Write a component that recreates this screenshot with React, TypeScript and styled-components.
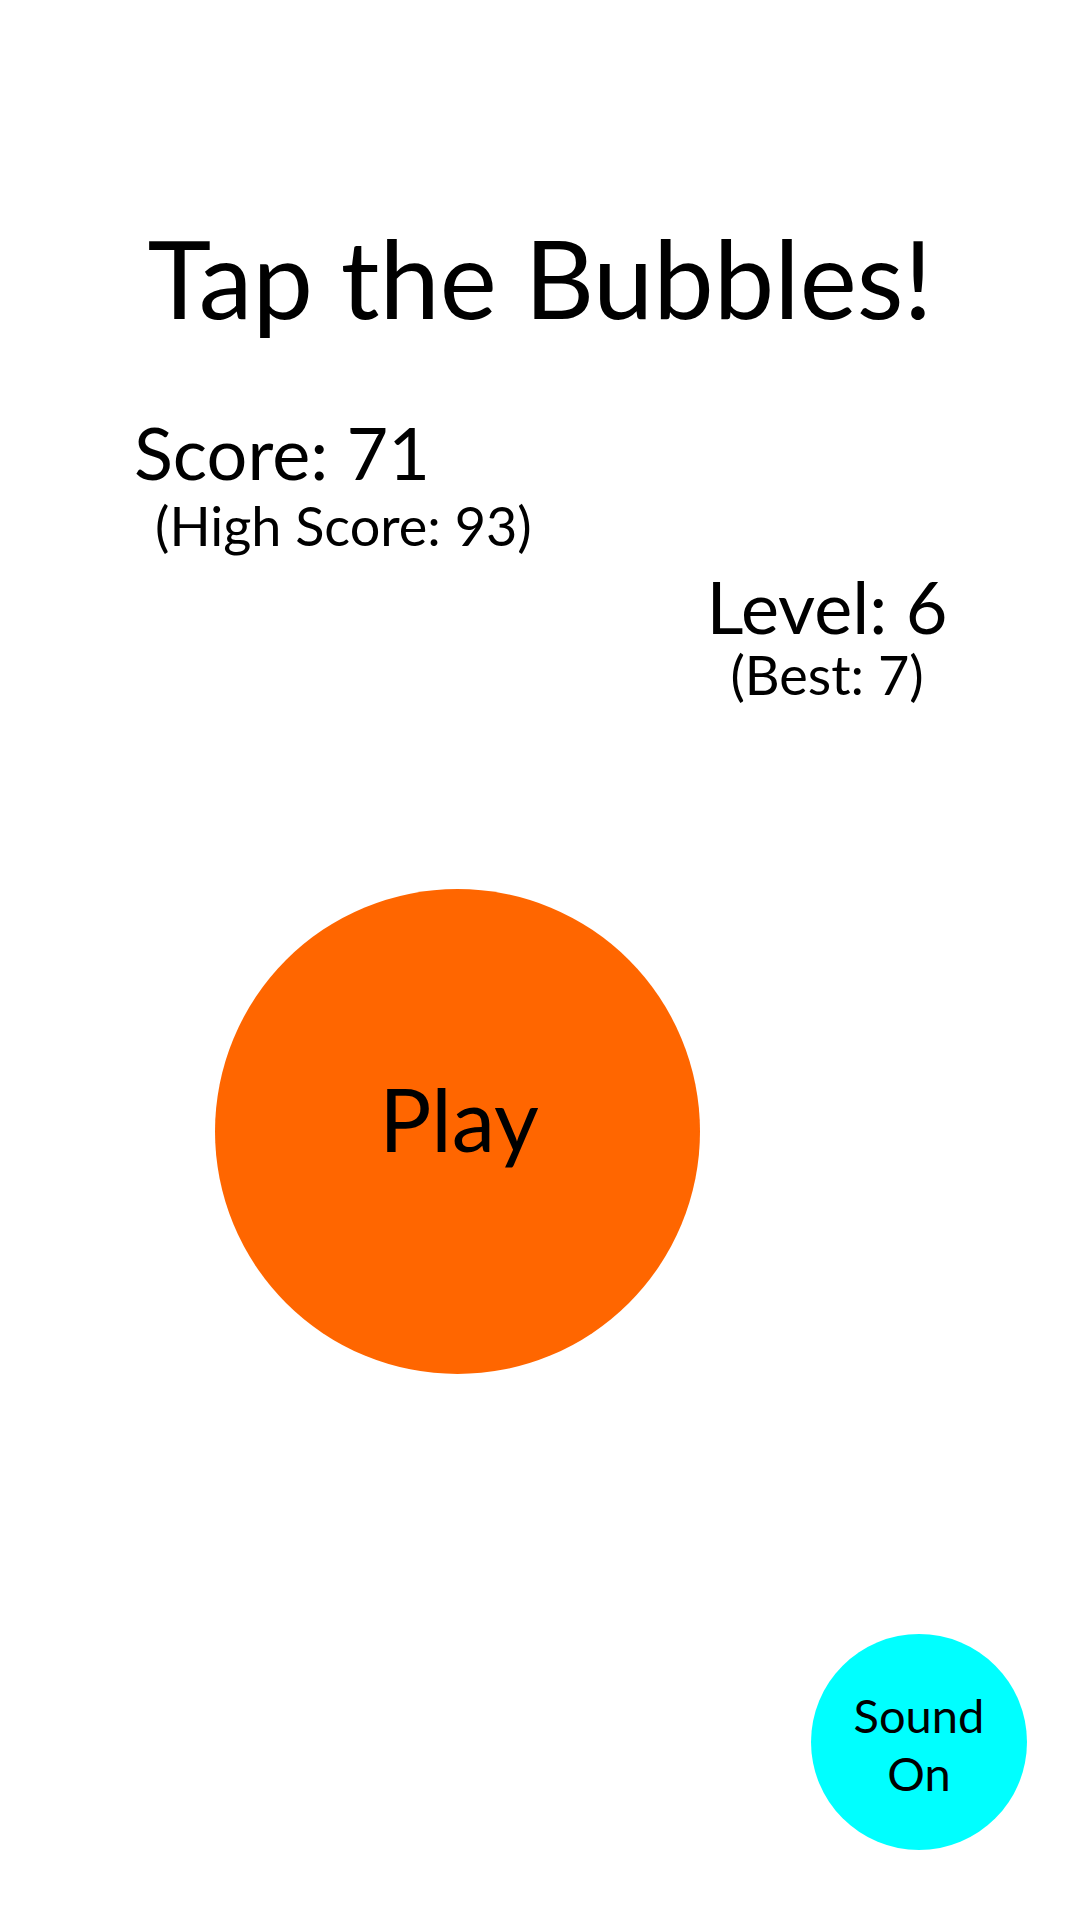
import React from 'react';
import styled, { createGlobalStyle } from 'styled-components';

const GlobalStyle = createGlobalStyle`
  html, body {
    margin: 0;
    padding: 0;
    background: #ffffff;
  }
  body {
    font-family: Lato, "Liberation Sans", sans-serif;
    color: #000000;
  }
`;

const Screen = styled.div`
  width: 1080px;
  height: 1920px;
  box-sizing: border-box;
  padding: 213px 0 70px;
  display: flex;
  flex-direction: column;
  background: #ffffff;
  overflow: hidden;
`;

const Title = styled.h1`
  margin: 0;
  font-size: 108px;
  font-weight: 400;
  line-height: 1.2;
  text-align: center;
`;

const StatBlock = styled.div<{ $align: 'left' | 'right' }>`
  display: flex;
  flex-direction: column;
  align-items: ${(p) => (p.$align === 'left' ? 'flex-start' : 'center')};
  align-self: ${(p) => (p.$align === 'left' ? 'flex-start' : 'flex-end')};
  margin-left: ${(p) => (p.$align === 'left' ? '134px' : '0')};
  margin-right: ${(p) => (p.$align === 'left' ? '0' : '103px')};
  width: ${(p) => (p.$align === 'left' ? 'auto' : '300px')};
`;

const StatMain = styled.div<{ $size: number }>`
  font-size: ${(p) => p.$size}px;
  line-height: 1;
  white-space: nowrap;
`;

const StatSub = styled.div<{ $indent?: number }>`
  font-size: 54px;
  line-height: 1;
  white-space: nowrap;
  padding-left: ${(p) => p.$indent ?? 0}px;
`;

const Bubble = styled.button<{ $size: number; $color: string; $font: number }>`
  width: ${(p) => p.$size}px;
  height: ${(p) => p.$size}px;
  flex-shrink: 0;
  border-radius: 50%;
  border: none;
  background: ${(p) => p.$color};
  color: #000000;
  font-family: Lato, "Liberation Sans", sans-serif;
  font-size: ${(p) => p.$font}px;
  display: flex;
  align-items: center;
  justify-content: center;
  text-align: center;
  padding: 0;
  cursor: pointer;
`;

const PlayBubble = styled(Bubble)`
  margin: 187px 0 0 215px;
  padding: 0 0 24px 3px;
  line-height: 1.2;
`;

const SoundBubble = styled(Bubble)`
  margin: auto 53px 0 0;
  align-self: flex-end;
  line-height: 58px;
  padding-top: 4px;
`;

export default function App() {
  return (
    <>
      <GlobalStyle />
      <Screen>
        <Title>Tap the Bubbles!</Title>
        <StatBlock $align="left" style={{ marginTop: 73 }}>
          <StatMain $size={72}>Score: 71</StatMain>
          <StatSub $indent={21} style={{ marginTop: 11 }}>(High Score: 93)</StatSub>
        </StatBlock>
        <StatBlock $align="right" style={{ marginTop: 17 }}>
          <StatMain $size={72}>Level: 6</StatMain>
          <StatSub style={{ marginTop: 6 }}>(Best: 7)</StatSub>
        </StatBlock>
        <PlayBubble $size={485} $color="#ff6600" $font={87}>
          Play
        </PlayBubble>
        <SoundBubble $size={216} $color="#00ffff" $font={47}>
          Sound
          <br />
          On
        </SoundBubble>
      </Screen>
    </>
  );
}
